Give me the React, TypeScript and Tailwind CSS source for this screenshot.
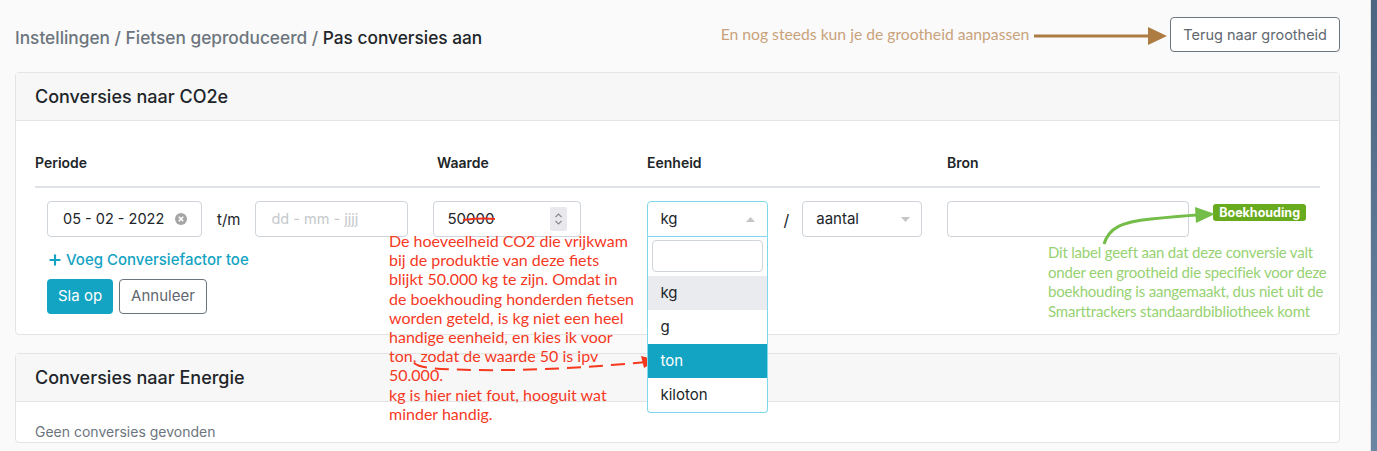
import { Plus } from 'lucide-react'

const UNITS = ['kg', 'g', 'ton', 'kiloton']

function Caret({ up }: { up?: boolean }) {
  return (
    <svg width="9" height="5" viewBox="0 0 9 5" className="shrink-0">
      {up ? <path d="M0 5 L4.5 0 L9 5 Z" fill="#c4c4c4" /> : <path d="M0 0 L4.5 5 L9 0 Z" fill="#c4c4c4" />}
    </svg>
  )
}

function UnitSelect() {
  return (
    <div className="relative w-[121px] shrink-0">
      <div className="flex h-[36px] items-center justify-between rounded-t-[4px] border border-[#7fd8ec] px-[12px] text-[15px] text-[#212529]">
        <span>kg</span>
        <Caret up />
      </div>
      <div className="absolute left-0 top-full z-10 w-full rounded-b-[4px] border border-t-0 border-[#7fd8ec] bg-white">
        <div className="px-[4px] pt-[3px] pb-[4px]">
          <div className="h-[32px] rounded-[4px] border border-[#ced4da]" />
        </div>
        {UNITS.map((u) => (
          <div
            key={u}
            className={[
              'flex h-[34px] items-center px-[12px] text-[15px]',
              u === 'kg' ? 'bg-[#e9ebee] text-[#212529]' : '',
              u === 'ton' ? 'bg-[#13a3c3] text-white' : 'text-[#212529]',
            ].join(' ')}
          >
            {u}
          </div>
        ))}
      </div>
    </div>
  )
}

function Card({ title, children }: { title: string; children: React.ReactNode }) {
  return (
    <div className="rounded-[4px] border border-[#e4e4e4] bg-white">
      <div className="flex h-[48px] items-center border-b border-[#e4e4e4] bg-[#f7f7f7] px-[19px] text-[18px] font-medium text-[#212529]">
        {title}
      </div>
      {children}
    </div>
  )
}

export default function App() {
  return (
    <div className="flex h-[451px] overflow-hidden bg-[#fafafa] font-['Inter',sans-serif] text-[14px]">
      <div className="w-[1371px] shrink-0 border-r border-[#e2e2e2] pl-[15px] pr-[30px]">
        <div className="flex h-[72px] items-start justify-between pt-[17px]">
          <div className="pt-[8px] text-[17.3px] font-medium leading-[26px] text-[#6c757d]">
            Instellingen / Fietsen geproduceerd / <span className="text-[#212529]">Pas conversies aan</span>
          </div>
          <div className="flex items-center">
            <span className="font-['Lato',sans-serif] text-[15.7px] text-[#c9a27b]">
              En nog steeds kun je de grootheid aanpassen
            </span>
            <svg width="134" height="20" viewBox="0 0 134 20" className="ml-[5px] mt-[2px]">
              <path d="M0 10 H116" stroke="#ad7c42" strokeWidth="3" />
              <path d="M114 1 L133 10 L114 19 Z" fill="#ad7c42" />
            </svg>
            <button className="ml-[2px] h-[35px] rounded-[4px] border border-[#6c757d] bg-white px-[12px] text-[14.5px] text-[#5f6870]">
              Terug naar grootheid
            </button>
          </div>
        </div>

        <Card title="Conversies naar CO2e">
          <div className="relative px-[19px] pb-[20px] pt-[32px]">
            <div className="grid grid-cols-[402px_210px_300px_1fr] border-b-2 border-[#dee2e6] pb-[13px] text-[14px] font-semibold leading-[20px] text-[#212529]">
              <div>Periode</div>
              <div>Waarde</div>
              <div>Eenheid</div>
              <div>Bron</div>
            </div>

            <div className="mt-[13px] flex items-start pl-[12px]">
              <div className="flex h-[36px] w-[155px] shrink-0 items-center justify-between rounded-[4px] border border-[#ced4da] pl-[15px] pr-[14px] text-[14.5px] text-[#212529]">
                <span>05 - 02 - 2022</span>
                <svg width="12" height="12" viewBox="0 0 12 12">
                  <circle cx="6" cy="6" r="6" fill="#a5a5a5" />
                  <path d="M3.8 3.8 L8.2 8.2 M8.2 3.8 L3.8 8.2" stroke="#fff" strokeWidth="1.6" />
                </svg>
              </div>
              <span className="ml-[15px] mt-[8px] text-[15px] text-[#212529]">t/m</span>
              <div className="ml-[15px] flex h-[36px] w-[153px] shrink-0 items-center rounded-[4px] border border-[#ced4da] pl-[15px] text-[14.5px] text-[#c4c8cc]">
                dd - mm - jjjj
              </div>
              <div className="relative ml-[25px] flex h-[36px] w-[148px] shrink-0 items-center justify-between rounded-[4px] border border-[#ced4da] pl-[13px] pr-[13px] text-[15px] text-[#212529]">
                <span>50000</span>
                <svg className="absolute left-[28px] top-[13px]" width="34" height="8" viewBox="0 0 34 8">
                  <path d="M1 5 C10 4 22 3 33 4" stroke="#f0311f" strokeWidth="2" fill="none" />
                </svg>
                <div className="flex h-[24px] w-[17px] flex-col items-center justify-center rounded-[2px] bg-[#e8e8ed]">
                  <svg width="9" height="16" viewBox="0 0 9 16">
                    <path d="M1.5 6 L4.5 3 L7.5 6 M1.5 10 L4.5 13 L7.5 10" stroke="#8a8a8f" strokeWidth="1.2" fill="none" />
                  </svg>
                </div>
              </div>
              <div className="ml-[66px]">
                <UnitSelect />
              </div>
              <span className="ml-[15px] mt-[7px] text-[16px] text-[#212529]">/</span>
              <div className="ml-[13px] flex h-[36px] w-[120px] shrink-0 items-center justify-between rounded-[4px] border border-[#ced4da] pl-[13px] pr-[11px] text-[15px] text-[#212529]">
                <span>aantal</span>
                <Caret />
              </div>
              <div className="ml-[25px] h-[36px] w-[242px] shrink-0 rounded-[4px] border border-[#ced4da]" />
              <span className="ml-[24px] mt-[3px] rounded-[3px] bg-[#69ab1e] px-[6px] text-[12.5px] font-bold leading-[17px] text-white">
                Boekhouding
              </span>
            </div>

            <div className="mt-[13px] flex items-center pl-[12px] text-[15px] font-medium leading-[20px] text-[#13a3c3]">
              <Plus size={16} strokeWidth={3.2} className="mr-[3px]" />
              Voeg Conversiefactor toe
            </div>
            <div className="mt-[9px] flex gap-[6px] pl-[12px]">
              <button className="h-[35px] rounded-[4px] bg-[#13a3c3] px-[11px] text-[15px] text-white">Sla op</button>
              <button className="h-[35px] rounded-[4px] border border-[#6c757d] bg-white px-[11px] text-[15px] text-[#5f6870]">
                Annuleer
              </button>
            </div>

            <div className="pointer-events-none absolute left-[373px] top-[110px] w-[300px] font-['Lato',sans-serif] text-[16px] leading-[19.2px] text-[#f5391f]">
              De hoeveelheid CO2 die vrijkwam
              <br />
              bij de produktie van deze fiets
              <br />
              blijkt 50.000 kg te zijn. Omdat in
              <br />
              de boekhouding honderden fietsen
              <br />
              worden geteld, is kg niet een heel
              <br />
              handige eenheid, en kies ik voor
              <br />
              ton, zodat de waarde 50 is ipv
              <br />
              50.000.
              <br />
              kg is hier niet fout, hooguit wat
              <br />
              minder handig.
            </div>
            <svg className="pointer-events-none absolute left-[396px] top-[230px]" width="245" height="24" viewBox="0 0 245 24">
              <path d="M2 12 C8 17 20 18 60 19 C120 20 180 16 236 11" stroke="#f5391f" strokeWidth="2" strokeDasharray="14 8" fill="none" />
              <path d="M229 5 L245 9 L232 17 Z" fill="#f5391f" />
            </svg>

            <div className="pointer-events-none absolute left-[1032px] top-[122px] w-[300px] font-['Lato',sans-serif] text-[15px] leading-[19.7px] tracking-[-0.2px] text-[#96d271]">
              Dit label geeft aan dat deze conversie valt
              <br />
              onder een grootheid die specifiek voor deze
              <br />
              boekhouding is aangemaakt, dus niet uit de
              <br />
              Smarttrackers standaardbibliotheek komt
            </div>
            <svg className="pointer-events-none absolute left-[1085px] top-[81px]" width="115" height="44" viewBox="0 0 115 44">
              <path d="M3 42 C8 26 20 20 50 17 C70 15 80 14 96 13" stroke="#73bd48" strokeWidth="3" fill="none" />
              <path d="M94 5 L114 12 L95 21 Z" fill="#73bd48" />
            </svg>
          </div>
        </Card>

        <div className="mt-[18px]">
          <Card title="Conversies naar Energie">
            <div className="px-[19px] pt-[19px] text-[14px] text-[#6c757d]">Geen conversies gevonden</div>
          </Card>
        </div>
      </div>
      <div className="flex-1 bg-[linear-gradient(to_bottom,#4c6581,#6a86a4)]" />
    </div>
  )
}
